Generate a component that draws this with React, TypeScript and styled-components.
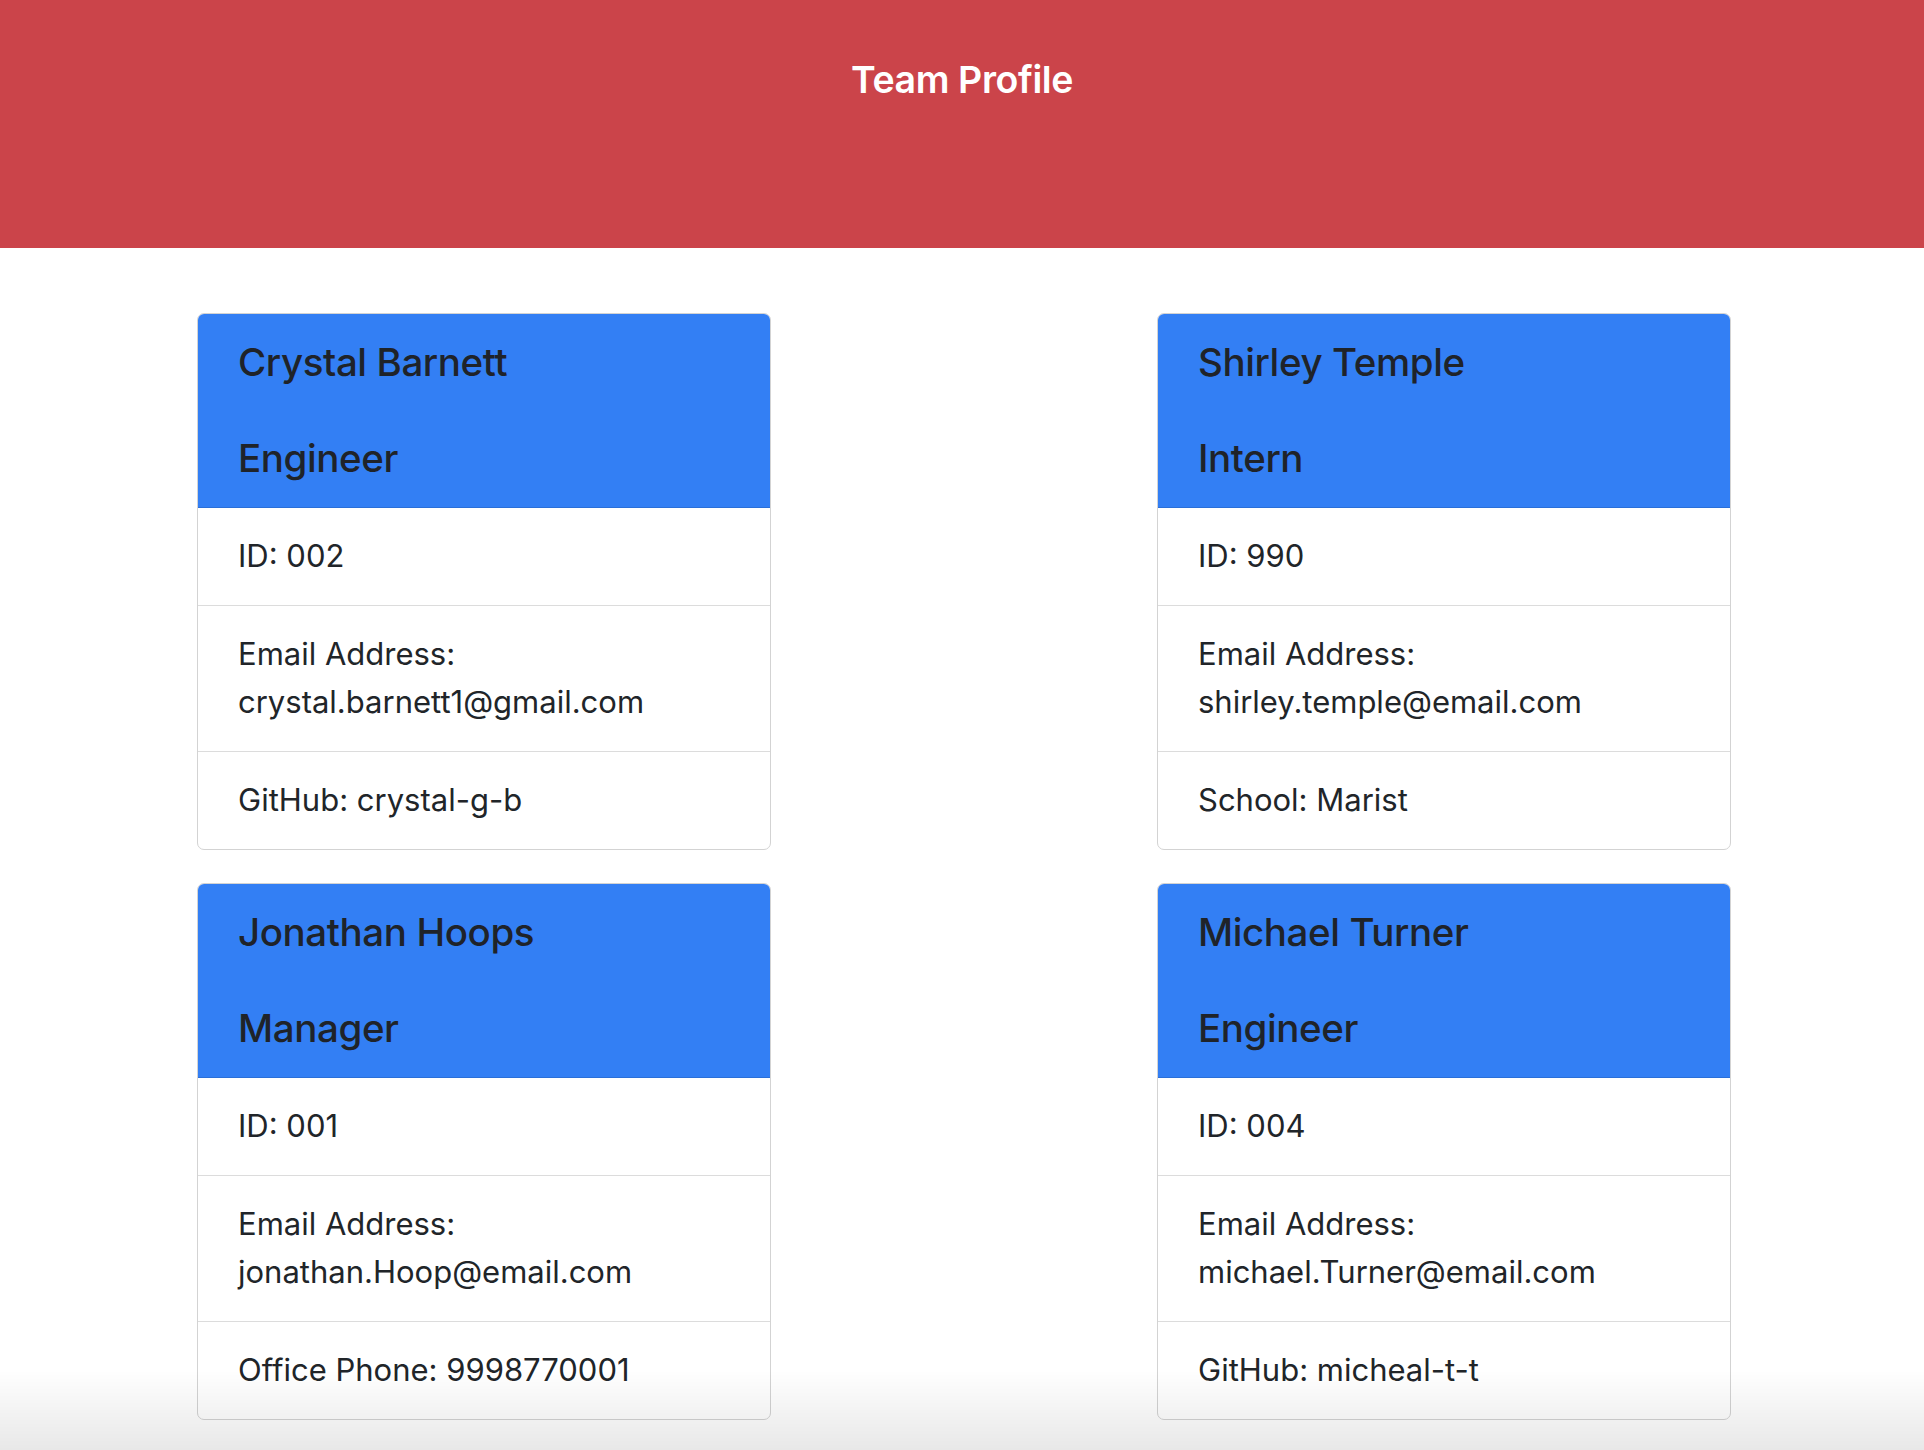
import React from "react";
import styled, { createGlobalStyle } from "styled-components";

const GlobalStyle = createGlobalStyle`
  html, body { margin: 0; padding: 0; background: #ffffff; }
  body {
    font-family: Inter, "Noto Sans", "Liberation Sans", sans-serif;
    color: #212529;
  }
  * { box-sizing: border-box; }
`;

const Banner = styled.header`
  height: 248px;
  background: #cb444a;
  display: flex;
  justify-content: center;
  padding-top: 55px;
`;

const Title = styled.h1`
  margin: 0;
  font-size: 37.5px;
  line-height: 50px;
  font-weight: 600;
  color: #ffffff;
  letter-spacing: -0.4px;
`;

const Grid = styled.main`
  display: grid;
  grid-template-columns: repeat(2, 574px);
  justify-content: center;
  column-gap: 386px;
  row-gap: 33px;
  padding-top: 65px;
  padding-left: 4px;
`;

const Card = styled.section`
  border: 1px solid #d3d3d3;
  border-radius: 7px;
  overflow: hidden;
  background: #ffffff;
`;

const CardHead = styled.div`
  background: #337ff4;
  border-bottom: 1px solid #2a6fd8;
  padding: 23px 40px 24px;
  display: flex;
  flex-direction: column;
  gap: 46px;
`;

const HeadText = styled.h2`
  margin: 0;
  font-size: 38.5px;
  line-height: 50px;
  font-weight: 500;
  color: #1f2329;
  letter-spacing: -0.4px;
`;

const Row = styled.div<{ $last?: boolean }>`
  padding: 24px 40px 25px;
  font-size: 31px;
  line-height: 48px;
  border-bottom: ${(p) => (p.$last ? "none" : "1px solid #dcdcdc")};
  color: #212529;
`;

const Fade = styled.div`
  position: fixed;
  left: 0;
  right: 0;
  bottom: 0;
  height: 80px;
  pointer-events: none;
  background: linear-gradient(rgba(0, 0, 0, 0), rgba(0, 0, 0, 0.09));
`;

type Member = {
  name: string;
  role: string;
  id: string;
  email: string;
  extra: string;
};

const team: Member[] = [
  { name: "Crystal Barnett", role: "Engineer", id: "002", email: "crystal.barnett1@gmail.com", extra: "GitHub: crystal-g-b" },
  { name: "Shirley Temple", role: "Intern", id: "990", email: "shirley.temple@email.com", extra: "School: Marist" },
  { name: "Jonathan Hoops", role: "Manager", id: "001", email: "jonathan.Hoop@email.com", extra: "Office Phone: 9998770001" },
  { name: "Michael Turner", role: "Engineer", id: "004", email: "michael.Turner@email.com", extra: "GitHub: micheal-t-t" },
];

export default function App() {
  return (
    <>
      <GlobalStyle />
      <Banner>
        <Title>Team Profile</Title>
      </Banner>
      <Grid>
        {team.map((m) => (
          <Card key={m.id}>
            <CardHead>
              <HeadText>{m.name}</HeadText>
              <HeadText>{m.role}</HeadText>
            </CardHead>
            <Row>ID: {m.id}</Row>
            <Row>
              Email Address:
              <br />
              {m.email}
            </Row>
            <Row $last>{m.extra}</Row>
          </Card>
        ))}
      </Grid>
      <Fade />
    </>
  );
}
